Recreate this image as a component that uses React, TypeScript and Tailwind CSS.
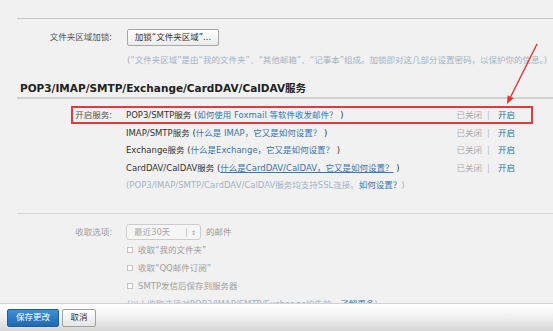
import type { ReactNode } from "react";

// QQ mail settings – POP3/IMAP/SMTP service section (annotated screenshot)

function Label({ children, muted }: { children?: ReactNode; muted?: boolean }) {
  return (
    <div
      className={`w-[95px] shrink-0 text-right ${muted ? "text-[#a0a0a0]" : "text-[#555]"}`}
    >
      {children}
    </div>
  );
}

interface Service {
  name: string;
  help: string;
  underline?: boolean;
}

const services: Service[] = [
  { name: "POP3/SMTP服务", help: "如何使用 Foxmail 等软件收发邮件？" },
  { name: "IMAP/SMTP服务", help: "什么是 IMAP，它又是如何设置？" },
  { name: "Exchange服务", help: "什么是Exchange，它又是如何设置？" },
  { name: "CardDAV/CalDAV服务", help: "什么是CardDAV/CalDAV，它又是如何设置？", underline: true },
];

function Checkbox({ text }: { text: string }) {
  return (
    <div className="flex h-[18px] items-center pl-[110px]">
      <span className="h-[6px] w-[6px] border border-[#c4c4c4] bg-white" />
      <span className="ml-[5px] text-[#a0a0a0]">{text}</span>
    </div>
  );
}

export default function App() {
  return (
    <div className="relative h-screen w-full overflow-hidden bg-[#f1f1f1] font-['DejaVu_Sans','Noto_Sans_CJK_SC',sans-serif] text-[8.5px] text-[#333]">
      <div className="pl-[17px] pt-[18px]">
        <div className="border-t border-[#c4c4c4]" />

        {/* folder lock */}
        <div className="mt-[10px] flex h-[17px] items-center">
          <Label>文件夹区域加锁:</Label>
          <button
            type="button"
            className="ml-[15px] h-[17px] w-[92px] rounded-[2px] border border-[#a8a8a8] bg-gradient-to-b from-white to-[#ebebeb] text-[8.5px] text-[#333]"
          >
            加锁“文件夹区域”...
          </button>
        </div>
        <div className="mt-[7px] pl-[110px] leading-[14px] whitespace-nowrap text-[#a3b3c6]">
          (“文件夹区域”是由“我的文件夹”、“其他邮箱”、“记事本”组成。加锁即对这几部分设置密码，以保护你的信息。)
        </div>

        {/* section title */}
        <div className="mt-[13px] border-b-2 border-[#d2d2d2] pl-[3px] text-[10.5px] leading-[17px] font-bold text-[#222]">
          POP3/IMAP/SMTP/Exchange/CardDAV/CalDAV服务
        </div>

        {/* services */}
        <div className="mt-[8px] leading-[17.5px]">
          {services.map((s, i) => (
            <div key={s.name} className="relative flex items-center justify-between pr-[38px]">
              <div className="flex items-center whitespace-nowrap">
                <Label>{i === 0 ? "开启服务:" : ""}</Label>
                <div className="ml-[14px]">
                  {s.name} (
                  <a className={`text-[#3777b0] ${s.underline ? "underline" : ""}`}>{s.help}</a>
                  {" )"}
                </div>
              </div>
              <div className="flex items-center">
                <span className="text-[#ababab]">已关闭</span>
                <span className="ml-[5px] text-[#bdbdbd]">|</span>
                <a className="ml-[8px] text-[#2d6fae]">开启</a>
              </div>
              {i === 0 && (
                <span className="absolute -top-[1px] right-[20px] left-[54px] h-[18px] border-2 border-[#e8383d]" />
              )}
            </div>
          ))}
          <div className="pl-[109px] whitespace-nowrap text-[#a3b3c6]">
            (POP3/IMAP/SMTP/CardDAV/CalDAV服务均支持SSL连接。
            <a className="text-[#3777b0]">如何设置？</a>)
          </div>
        </div>

        <div className="mt-[18.5px] border-t border-[#d6d6d6]" />

        {/* fetch options */}
        <div className="mt-[10px] flex h-[16px] items-center">
          <Label muted>收取选项:</Label>
          <div className="ml-[14px] flex h-[16px] w-[75px] items-center rounded-[3px] border border-[#cdcdcd] bg-[#f6f6f6] text-[#a8a8a8]">
            <span className="ml-[7px] flex-1">最近30天</span>
            <span className="h-[9px] border-l border-[#cfcfcf]" />
            <span className="mx-[4px] text-[6px] text-[#999]">⇕</span>
          </div>
          <span className="ml-[5px] text-[#999]">的邮件</span>
        </div>
        <div className="mt-[1px]">
          <Checkbox text="收取“我的文件夹”" />
          <Checkbox text="收取“QQ邮件订阅”" />
          <Checkbox text="SMTP发信后保存到服务器" />
          <div className="flex h-[18px] items-center pl-[110px] whitespace-nowrap text-[#a3b3c6]">
            (以上收取选项对POP3/IMAP/SMTP/Exchange均生效。
            <a className="text-[#3777b0]">了解更多</a>)
          </div>
        </div>
      </div>

      {/* red arrow annotation */}
      <svg
        className="pointer-events-none absolute top-0 left-0"
        width="553"
        height="331"
        viewBox="0 0 553 331"
      >
        <line x1="537" y1="44" x2="510.6" y2="97" stroke="#e8322f" strokeWidth="1.4" />
        <polygon points="507,104 513.6,98.3 507.6,95.2" fill="#e8322f" />
      </svg>

      {/* sticky footer */}
      <div className="absolute right-0 bottom-0 left-0 flex h-[28px] items-center gap-[3px] border-t border-[#d2d2d2] bg-gradient-to-b from-white via-[#f0f0f0] to-[#d6d6d6] pl-[7px]">
        <button
          type="button"
          className="h-[18px] w-[52px] rounded-[2px] border border-[#1c5f9f] bg-gradient-to-b from-[#3e8fd6] to-[#1f69b2] text-[8.5px] text-white"
        >
          保存更改
        </button>
        <button
          type="button"
          className="h-[18px] w-[34px] rounded-[2px] border border-[#a0a0a0] bg-gradient-to-b from-white to-[#e6e6e6] text-[8.5px] text-[#333]"
        >
          取消
        </button>
      </div>
    </div>
  );
}
